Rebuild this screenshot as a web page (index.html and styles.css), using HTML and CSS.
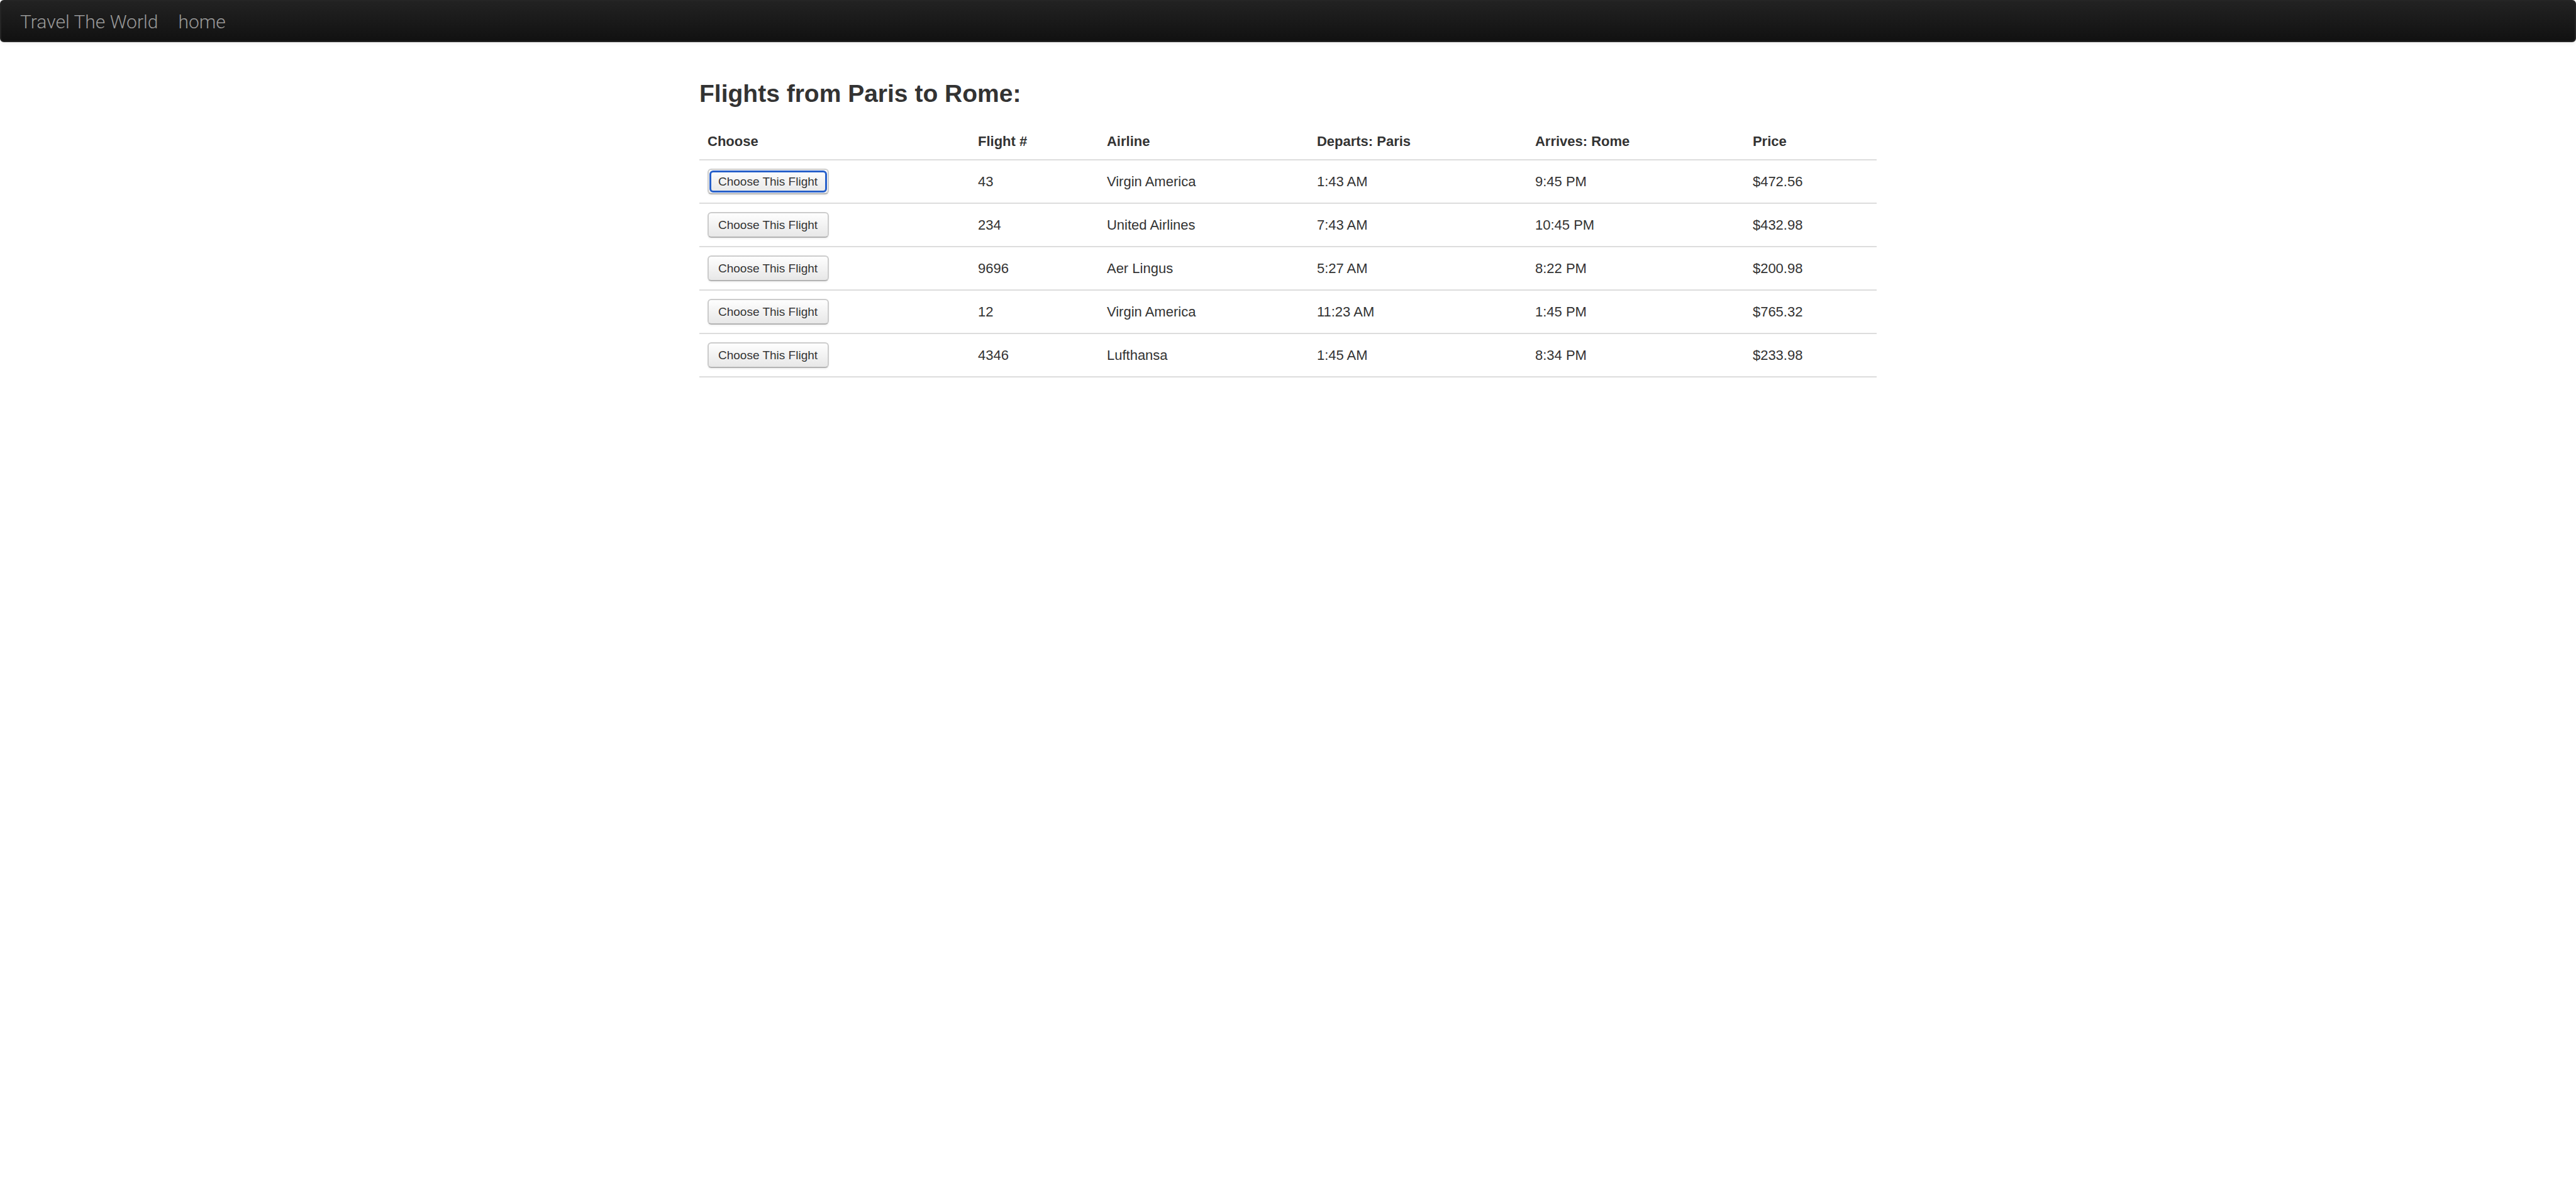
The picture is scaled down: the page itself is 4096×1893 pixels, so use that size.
FILE: index.html
```html
<!DOCTYPE html>
<html lang="en">
<head>
<meta charset="utf-8">
<meta name="viewport" content="width=device-width, initial-scale=1">
<title>Travel The World - reserve</title>
<link rel="stylesheet" href="styles.css">
</head>
<body>
<nav class="navbar">
  <a class="brand" href="#">Travel The World</a>
  <a class="brand" href="#">home</a>
</nav>
<main class="container">
  <h3 class="title">Flights from Paris to Rome:</h3>
  <table class="table">
    <colgroup>
      <col class="col-choose"><col class="col-number"><col class="col-airline"><col class="col-departs"><col class="col-arrives"><col>
    </colgroup>
    <thead>
      <tr><th>Choose</th><th>Flight #</th><th>Airline</th><th>Departs: Paris</th><th>Arrives: Rome</th><th>Price</th></tr>
    </thead>
    <tbody>
      <tr><td><button class="btn is-focused" type="button">Choose This Flight</button></td><td>43</td><td>Virgin America</td><td>1:43 AM</td><td>9:45 PM</td><td>$472.56</td></tr>
      <tr><td><button class="btn" type="button">Choose This Flight</button></td><td>234</td><td>United Airlines</td><td>7:43 AM</td><td>10:45 PM</td><td>$432.98</td></tr>
      <tr><td><button class="btn" type="button">Choose This Flight</button></td><td>9696</td><td>Aer Lingus</td><td>5:27 AM</td><td>8:22 PM</td><td>$200.98</td></tr>
      <tr><td><button class="btn" type="button">Choose This Flight</button></td><td>12</td><td>Virgin America</td><td>11:23 AM</td><td>1:45 PM</td><td>$765.32</td></tr>
      <tr><td><button class="btn" type="button">Choose This Flight</button></td><td>4346</td><td>Lufthansa</td><td>1:45 AM</td><td>8:34 PM</td><td>$233.98</td></tr>
    </tbody>
  </table>
</main>
</body>
</html>
```
FILE: styles.css
```css
* {
  box-sizing: border-box;
}

body {
  margin: 0;
  background: #fff;
  color: #333;
  font-family: "Helvetica Neue", "Liberation Sans", Arial, sans-serif;
  font-size: 22px;
  line-height: 32px;
}

.navbar {
  display: flex;
  align-items: center;
  gap: 32px;
  min-height: 67px;
  margin-bottom: 50px;
  padding: 2px 30px 0;
  border: 2px solid #252525;
  border-radius: 6px;
  background: #1b1b1b linear-gradient(#222, #111);
  box-shadow: 0 2px 6px rgba(0, 0, 0, 0.067);
}

.brand {
  color: #999;
  font-family: Roboto, "Liberation Sans", sans-serif;
  font-size: 30px;
  font-weight: 300;
  text-decoration: none;
  text-shadow: 0 -1px 0 rgba(0, 0, 0, 0.25);
}

.container {
  max-width: 1872px;
  margin: 0 auto;
}

.title {
  margin: 0 0 14px;
  font-size: 39px;
  line-height: 64px;
}

.table {
  width: 100%;
  border-spacing: 0;
  table-layout: fixed;
}

.col-choose { width: 22.97%; }
.col-number { width: 10.95%; }
.col-airline { width: 17.84%; }
.col-departs { width: 18.54%; }
.col-arrives { width: 18.48%; }

.table th,
.table td {
  padding: 13px;
  border-bottom: 2px solid #ddd;
  text-align: left;
  vertical-align: middle;
}

.table th {
  padding-top: 14px;
  padding-bottom: 12px;
}

.btn {
  display: block;
  position: relative;
  padding: 3px 16px 3px 15px;
  border: 2px solid #ccc;
  border-bottom-color: #b3b3b3;
  border-radius: 6px;
  background: #f5f5f5 linear-gradient(#fff, #e6e6e6) border-box;
  box-shadow: 0 2px 3px rgba(0, 0, 0, 0.05);
  color: #333;
  font-family: inherit;
  font-size: 19px;
  line-height: 31px;
  text-shadow: 0 1px 1px rgba(255, 255, 255, 0.75);
}

.btn:focus {
  outline: none;
}

/* Focus ring sits just inside the button edge */
.btn.is-focused::after,
.btn:focus-visible::after {
  content: "";
  position: absolute;
  inset: 1px;
  border: 3px solid #2760ca;
  border-radius: 6px;
  box-shadow: 0 0 0 1px #fff;
}
```
